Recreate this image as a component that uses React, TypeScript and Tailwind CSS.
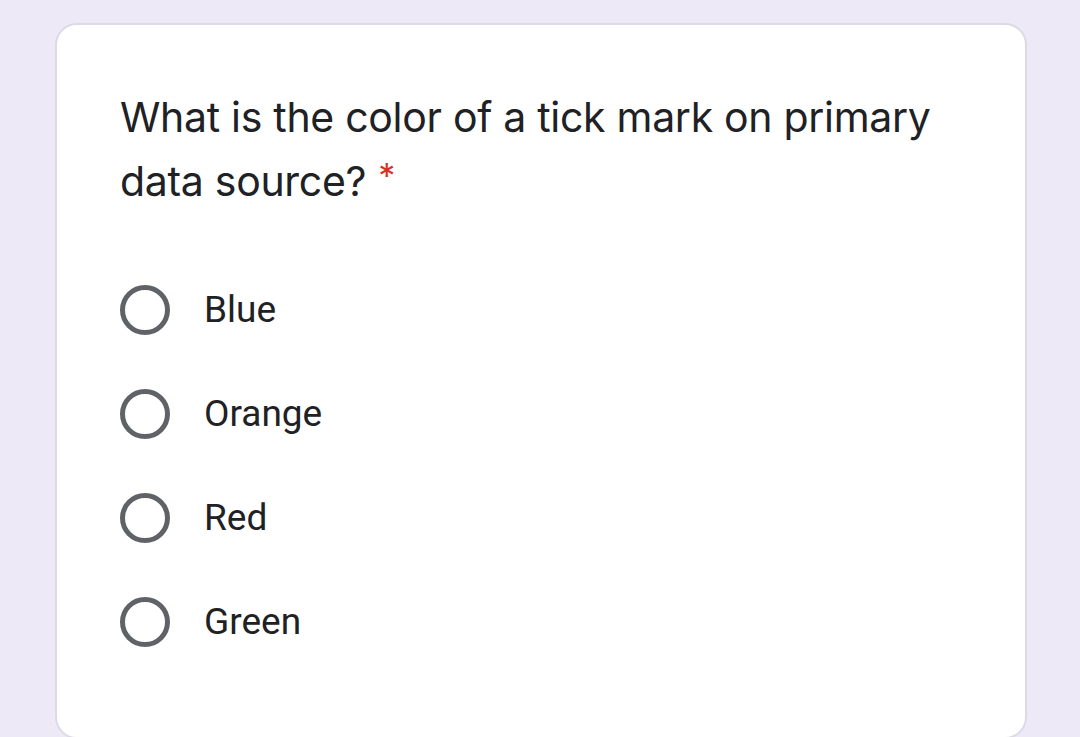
const options = ["Blue", "Orange", "Red", "Green"];

function Radio() {
  return <span className="block w-[50px] h-[50px] rounded-full border-[5px] border-[#5f6368] shrink-0" />;
}

export default function App() {
  return (
    <div className="w-[1080px] h-[737px] bg-[#ede9f7] pt-[23px] pl-[55px] overflow-hidden">
      <div className="w-[972px] h-[716px] bg-white border-2 border-[#dcdae3] rounded-[22px] pl-[63px] pt-[60px]">
        <h1 className="text-[41px] leading-[64px] text-[#202124] font-['Inter',sans-serif] tracking-[-0.3px] w-[860px]">
          What is the color of a tick mark on primary data source?
          <span className="relative -top-[8px] ml-[12px] text-[#d93025] text-[34px] leading-none">*</span>
        </h1>
        <div className="mt-[72px] flex flex-col gap-[54px]">
          {options.map((o) => (
            <label key={o} className="flex items-center gap-[34px] font-['Roboto',sans-serif] text-[37px] text-[#202124] leading-[50px]">
              <Radio />
              {o}
            </label>
          ))}
        </div>
      </div>
    </div>
  );
}
